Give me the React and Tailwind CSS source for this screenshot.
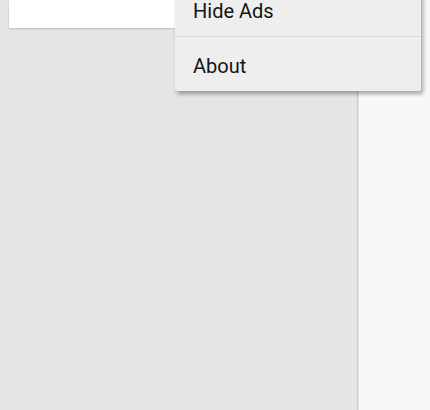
import React from 'react'

function OverflowMenu() {
  const items = ['Hide Ads', 'About']
  return (
    <div className="absolute left-[175px] top-[-17px] w-[246px] bg-[#eeeeee] rounded-[2px] shadow-[2px_3px_4px_rgba(0,0,0,0.35)] z-10">
      {items.map((label, i) => (
        <div
          key={label}
          className={`h-[54px] flex items-center pl-[18px] pt-[3px] text-[20px] text-[#141414] ${i < items.length - 1 ? 'border-b border-[#d9d9d9]' : ''}`}
        >
          {label}
        </div>
      ))}
    </div>
  )
}

export default function App() {
  return (
    <div
      className="w-[430px] h-[410px] flex overflow-hidden relative"
      style={{ fontFamily: 'Roboto, "Liberation Sans", sans-serif' }}
    >
      {/* left pane */}
      <div className="w-[357px] h-full bg-[#e5e5e5] relative">
        <div className="mx-[9px] h-[28px] bg-white overflow-hidden shadow-[0_1px_2px_rgba(0,0,0,0.18)]">
          <div className="-mt-[19px] pl-[16px] text-[16px] leading-[20px] text-[#b0b0b0]">Apps</div>
        </div>
      </div>

      {/* pane divider */}
      <div className="w-[1px] h-full bg-[#c9c9c9]" />
      <div className="w-[1px] h-full bg-[#e6e6e6]" />

      {/* right pane */}
      <div className="flex-1 h-full bg-[#f8f8f8]" />

      <OverflowMenu />
    </div>
  )
}
